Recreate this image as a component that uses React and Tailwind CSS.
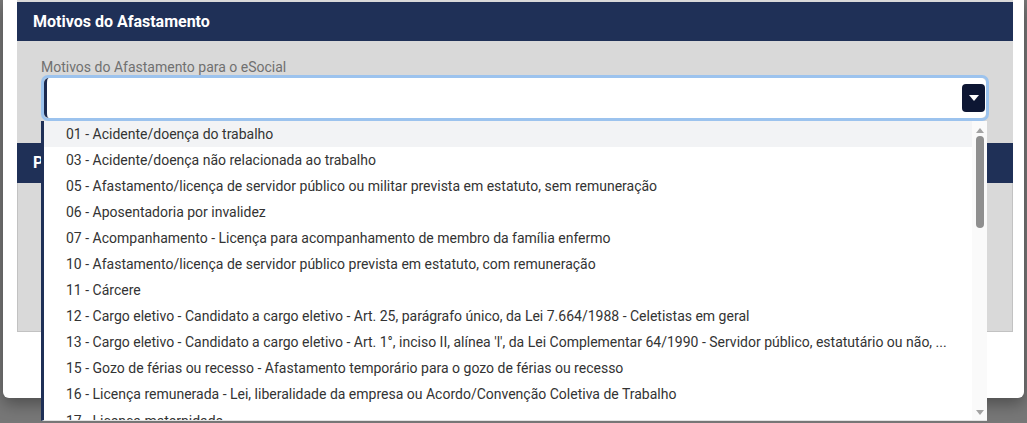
const motivos = [
  '01 - Acidente/doença do trabalho',
  '03 - Acidente/doença não relacionada ao trabalho',
  '05 - Afastamento/licença de servidor público ou militar prevista em estatuto, sem remuneração',
  '06 - Aposentadoria por invalidez',
  '07 - Acompanhamento - Licença para acompanhamento de membro da família enfermo',
  '10 - Afastamento/licença de servidor público prevista em estatuto, com remuneração',
  '11 - Cárcere',
  '12 - Cargo eletivo - Candidato a cargo eletivo - Art. 25, parágrafo único, da Lei 7.664/1988 - Celetistas em geral',
  "13 - Cargo eletivo - Candidato a cargo eletivo - Art. 1°, inciso II, alínea 'l', da Lei Complementar 64/1990 - Servidor público, estatutário ou não, ...",
  '15 - Gozo de férias ou recesso - Afastamento temporário para o gozo de férias ou recesso',
  '16 - Licença remunerada - Lei, liberalidade da empresa ou Acordo/Convenção Coletiva de Trabalho',
  '17 - Licença maternidade',
]

function DropdownList() {
  return (
    <div className="absolute left-[41px] top-[121px] w-[946px] h-[300px] flex bg-white border-l-[3px] border-[#1f3057] border-b border-b-[#e2e2e2] overflow-hidden">
      <div className="flex-1 min-w-0">
        {motivos.map((m, i) => (
          <div
            key={m}
            className={`h-[26.1px] flex items-center pl-[22px] pr-4 text-[14px] text-[#333333] whitespace-nowrap overflow-hidden ${i === 0 ? 'bg-[#f2f3f5]' : ''}`}
          >
            {m}
          </div>
        ))}
      </div>
      {/* scrollbar */}
      <div className="w-[15px] bg-[#fafafa] flex flex-col items-center">
        <div className="mt-[7px] w-0 h-0 border-x-[4px] border-x-transparent border-b-[5px] border-b-[#a3a3a3]" />
        <div className="mt-[3px] w-[8px] h-[92px] rounded-full bg-[#8f8f8f]" />
        <div className="flex-1" />
        <div className="mb-[5px] w-0 h-0 border-x-[4px] border-x-transparent border-t-[5px] border-t-[#a3a3a3]" />
      </div>
    </div>
  )
}

export default function App() {
  return (
    <div
      className="relative w-[1027px] h-[423px] overflow-hidden bg-[#777777]"
      style={{ fontFamily: 'Roboto, "Liberation Sans", sans-serif' }}
    >
      {/* Modal */}
      <div className="ml-[3px] w-[1021px] h-[398px] bg-white rounded-b-[6px] shadow-[0_6px_16px_rgba(0,0,0,0.35)] pl-[14px] pr-[11px]">
        {/* Panel 1 */}
        <div className="bg-[#d9d9d9] pt-[2px]">
          <div className="h-[39px] bg-[#1f3057] flex items-center px-4">
            <h2 className="text-[16px] font-bold text-white">Motivos do Afastamento</h2>
          </div>
          <div className="h-[102px] px-6 pt-[19px]">
            <label className="block h-[15px] leading-[15px] text-[14px] text-[#707070]">
              Motivos do Afastamento para o eSocial
            </label>
            <div className="h-[46px] rounded-[7px] border-[3px] border-[#9cc3ee]">
              <div className="h-full rounded-[5px] border-l-[3px] border-[#1c2a4f] bg-white flex items-center justify-end pr-[1px]">
                <button className="w-[23px] h-[28px] rounded-[4px] bg-[#0d1633] flex items-center justify-center">
                  <span className="w-0 h-0 border-x-[5px] border-x-transparent border-t-[6px] border-t-white" />
                </button>
              </div>
            </div>
          </div>
        </div>

        {/* Panel 2 */}
        <div>
          <div className="h-[40px] bg-[#1f3057] flex items-center px-4">
            <h2 className="text-[16px] font-bold text-white">Período do Afastamento</h2>
          </div>
          <div className="h-[149px] bg-[#d9d9d9] border-x border-b border-[#c2c2c2]" />
        </div>
      </div>

      <DropdownList />
    </div>
  )
}
